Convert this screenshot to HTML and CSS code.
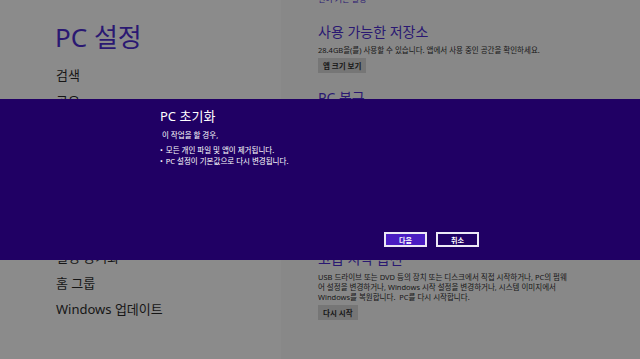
FILE: index.html
```html
<!DOCTYPE html>
<html lang="ko">
<head>
    <meta charset="UTF-8">
    <meta name="viewport" content="width=device-width, initial-scale=1.0">
    <title>PC 설정</title>
    <link rel="stylesheet" href="styles.css">
</head>
<body>

    <div class="page">
        <div class="left-pane">
            <h1 class="pane-title">PC 설정</h1>
            <ul class="nav-list">
                <li>검색</li>
                <li>공유</li>
                <li>일반</li>
                <li>개인 정보</li>
                <li>장치</li>
                <li>무선</li>
                <li>접근성</li>
                <li>설정 동기화</li>
                <li>홈 그룹</li>
                <li>Windows 업데이트</li>
            </ul>
        </div>

        <div class="right-pane">
            <div class="top-link">언어 기본 설정</div>

            <h2 class="section-title">사용 가능한 저장소</h2>
            <p class="section-text">28.4GB을(를) 사용할 수 있습니다. 앱에서 사용 중인 공간을 확인하세요.</p>
            <button class="gray-button">앱 크기 보기</button>

            <h2 class="section-title title-recover">PC 복구</h2>
            <p class="section-text">파일에 영향을 주지 않고 PC를 복구합니다.</p>
            <button class="gray-button">시작</button>

            <h2 class="section-title title-advanced">고급 시작 옵션</h2>
            <p class="section-text">USB 드라이브 또는 DVD 등의 장치 또는 디스크에서 직접 시작하거나, PC의 펌웨<br>어 설정을 변경하거나, Windows 시작 설정을 변경하거나, 시스템 이미지에서<br>Windows를 복원합니다.&nbsp; PC를 다시 시작합니다.</p>
            <button class="gray-button">다시 시작</button>
        </div>
    </div>

    <div class="dialog-band">
        <div class="dialog">
            <h3 class="dialog-title">PC 초기화</h3>
            <p class="dialog-lead">이 작업을 할 경우,</p>
            <ul class="dialog-list">
                <li>모든 개인 파일 및 앱이 제거됩니다.</li>
                <li>PC 설정이 기본값으로 다시 변경됩니다.</li>
            </ul>
            <div class="dialog-buttons">
                <button class="dialog-button primary">다음</button>
                <button class="dialog-button">취소</button>
            </div>
        </div>
    </div>

</body>
</html>
```

FILE: styles.css
```css
body {
    margin: 0;
    width: 640px;
    height: 359px;
    overflow: hidden;
    position: relative;
    font-family: "Noto Sans", "Noto Sans CJK KR", sans-serif;
    background-color: #898989;
    color: #161616;
}

.page {
    display: flex;
    height: 359px;
}

.left-pane {
    width: 226px;
    padding-left: 55px;
    background-color: #8b8b8b;
}

.pane-title {
    margin: 20px 0 0 0;
    font-size: 26px;
    font-weight: normal;
    line-height: 34px;
    color: #2a1872;
}

.nav-list {
    list-style: none;
    margin: 8px 0 0 1px;
    padding: 0;
}

.nav-list li {
    font-size: 13px;
    line-height: 26px;
    height: 26px;
}

.right-pane {
    flex: 1;
    padding-left: 37px;
    background-color: #888888;
}

.top-link {
    margin-top: -6px;
    font-size: 8px;
    line-height: 10px;
    color: #2a1872;
}

.section-title {
    margin: 18px 0 0 0;
    font-size: 14px;
    font-weight: normal;
    line-height: 20px;
    color: #2a1872;
}

.title-recover {
    margin-top: 15px;
}

.title-advanced {
    margin-top: 111px;
}

.section-text {
    margin: 4px 0 2px 0;
    font-size: 7.5px;
    line-height: 9.7px;
}

.gray-button {
    display: block;
    border: none;
    padding: 0 5px;
    height: 15px;
    font-family: inherit;
    font-size: 7.5px;
    font-weight: bold;
    color: #161616;
    background-color: #767676;
}

.dialog-band {
    position: absolute;
    left: 0;
    top: 99px;
    width: 640px;
    height: 161px;
    background-color: #200064;
    color: #ffffff;
}

.dialog {
    width: 320px;
    margin-left: 160px;
    padding-top: 7px;
}

.dialog-title {
    margin: 0;
    font-size: 13px;
    font-weight: normal;
    line-height: 20px;
}

.dialog-lead {
    margin: 4px 0 0 2px;
    font-size: 7.5px;
    line-height: 10px;
}

.dialog-list {
    list-style: none;
    margin: 5px 0 0 0;
    padding: 0;
}

.dialog-list li {
    font-size: 7.5px;
    line-height: 11px;
}

.dialog-list li::before {
    content: "\2022";
    margin-right: 3px;
}

.dialog-buttons {
    display: flex;
    gap: 9px;
    justify-content: flex-end;
    margin-top: 65px;
    margin-right: 1px;
}

.dialog-button {
    width: 43px;
    height: 15px;
    padding: 0;
    border: 2px solid #ece8f6;
    background-color: transparent;
    color: #ffffff;
    font-family: inherit;
    font-size: 7px;
    font-weight: bold;
}

.dialog-button.primary {
    background-color: #4a1cc2;
}
```
